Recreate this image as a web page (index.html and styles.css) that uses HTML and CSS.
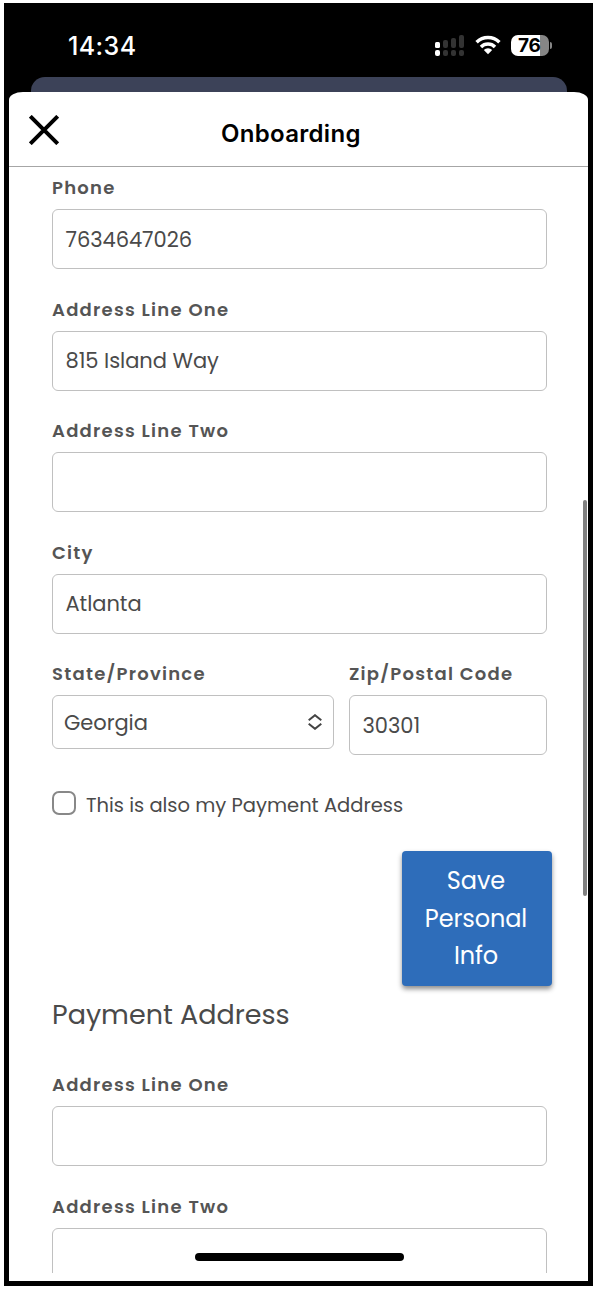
FILE: index.html
```html
<!DOCTYPE html>
<html lang="en">
<head>
<meta charset="utf-8">
<title>Onboarding</title>
<link rel="stylesheet" href="styles.css">
</head>
<body>
<div class="phone">
  <div class="status">
    <span class="time">14:34</span>
    <div class="indicators">
      <svg class="signal" width="30" height="22" viewBox="0 0 30 22">
        <g fill="#fff"><rect x="0" y="7" width="5" height="6" rx="1.5"/><rect x="0" y="15" width="5" height="6" rx="2"/></g>
        <g fill="#333"><rect x="8" y="5" width="5" height="8" rx="2"/><rect x="16" y="3" width="5" height="10" rx="2"/><rect x="24" y="0" width="5" height="13" rx="2"/><rect x="8" y="15" width="5" height="6" rx="2"/><rect x="16" y="15" width="5" height="6" rx="2"/><rect x="24" y="15" width="5" height="6" rx="2"/></g>
      </svg>
      <svg class="wifi" width="26" height="20" viewBox="0 0 26 20">
        <g fill="none" stroke="#fff" stroke-width="3.5"><path d="M1.6 7.2A16.3 16.3 0 0 1 24.4 7.2"/><path d="M6 11.9A10 10 0 0 1 20 11.9"/></g>
        <path d="M8.8 14.9a6 6 0 0 1 8.4 0L13 19.2z" fill="#fff"/>
      </svg>
      <div class="battery"><div class="cell">76</div><div class="tip"></div></div>
    </div>
  </div>
  <div class="back-card"></div>
  <main class="sheet">
    <header class="header">
      <svg class="close" width="30" height="30" viewBox="0 0 30 30"><path d="M1.3 1.3 28.7 28.7M28.7 1.3 1.3 28.7" stroke="#000" stroke-width="4"/></svg>
      <h1 class="title">Onboarding</h1>
    </header>
    <div class="content">
      <div class="field"><div class="label">Phone</div><div class="input">7634647026</div></div>
      <div class="field"><div class="label">Address Line One</div><div class="input">815 Island Way</div></div>
      <div class="field"><div class="label">Address Line Two</div><div class="input"></div></div>
      <div class="field"><div class="label">City</div><div class="input">Atlanta</div></div>
      <div class="row">
        <div class="field state">
          <div class="label">State/Province</div>
          <div class="select">Georgia
            <svg width="14" height="16" viewBox="0 0 14 16"><path d="M.7 6.2 7 1.2 13.3 6.2M.7 9.8 7 14.8 13.3 9.8" fill="none" stroke="#444" stroke-width="2"/></svg>
          </div>
        </div>
        <div class="field zip"><div class="label">Zip/Postal Code</div><div class="input">30301</div></div>
      </div>
      <div class="check"><span class="box"></span><span class="check-text">This is also my Payment Address</span></div>
      <div class="save"><span>Save</span><span>Personal</span><span>Info</span></div>
      <h2 class="section">Payment Address</h2>
      <div class="field"><div class="label">Address Line One</div><div class="input"></div></div>
      <div class="field"><div class="label">Address Line Two</div><div class="input"></div></div>
    </div>
    <div class="scrollbar"></div>
    <div class="home"></div>
  </main>
</div>
</body>
</html>
```
FILE: styles.css
```css
* { box-sizing: border-box; }
body { margin: 0; background: #fff; font-family: Poppins, Inter, sans-serif; color: #4a4a4a; }

.phone { margin: 3px 0 0 4px; width: 589px; height: 1283px; border: 5px solid #000; background: #000; display: flex; flex-direction: column; overflow: hidden; }

.status { height: 69px; display: flex; justify-content: space-between; padding: 0 36px 0 59px; flex: none; }
.time { font: 500 25px/30px Inter, sans-serif; letter-spacing: .4px; color: #fff; margin-top: 23px; }
.indicators { display: flex; height: 22px; margin-top: 27px; }
.signal { margin-right: 10px; }
.wifi { margin-right: 10px; }
.battery { display: flex; align-items: center; height: 21px; }
.cell { width: 38px; height: 21px; border-radius: 7px; background: linear-gradient(90deg, #fff 29px, #868686 29px); color: #000; font: 700 19px/21px Inter, sans-serif; letter-spacing: -.3px; padding-left: 7px; }
.tip { width: 2px; height: 7px; margin-left: 1px; border-radius: 0 2px 2px 0; background: #868686; }

.back-card { height: 15px; margin: 0 21px 0 22px; border-radius: 14px 14px 0 0; background: #3c4258; flex: none; }
.sheet { position: relative; flex: 1; background: #fff; border-radius: 14px 14px 0 0 / 8px 8px 0 0; min-height: 0; }
.header { height: 75px; border-bottom: 1px solid #a6a6a6; display: flex; padding: 23px 20px 0; }
.title { margin: 4px 0 0 162px; font: 600 24px/30px Inter, sans-serif; letter-spacing: .3px; color: #000; }

.content { height: 1106px; overflow: hidden; padding: 8px 41px 0 43px; }
.field { margin-bottom: 27.5px; }
.label { height: 34px; font-size: 18px; line-height: 26px; font-weight: 600; letter-spacing: 1.25px; color: #555; white-space: nowrap; }
.input, .select { border: 1px solid #c0c0c0; border-radius: 6px; height: 60px; display: flex; align-items: center; padding: 0 12.5px; font-size: 21px; letter-spacing: -.05px; }
.select { height: 54px; justify-content: space-between; padding: 0 11px; }
.row { display: flex; gap: 15px; }
.row .field { margin: 0; }
.state { width: 282px; }
.zip { width: 198px; }

.check { display: flex; align-items: center; gap: 10px; height: 28px; margin-top: 34px; font-size: 19.5px; }
.box { width: 24px; height: 24px; border: 2px solid #888; border-radius: 7px; }
.check-text { padding-top: 4px; }
.save { width: 150px; height: 135px; margin: 34px -5px 0 auto; border-radius: 4px; background: #2e6dba; color: #fff; box-shadow: 0 3px 5px rgba(0, 0, 0, .45); display: flex; flex-direction: column; align-items: center; padding: 11px 2px 0 0; font-size: 24px; line-height: 37.5px; letter-spacing: -.1px; }
.section { margin: 9px 0 37px; font-size: 27px; line-height: 40px; font-weight: 400; }

.scrollbar { position: absolute; right: 1px; top: 408px; width: 4px; height: 396px; border-radius: 2px; background: #808080; }
.home { position: absolute; left: 186px; bottom: 20px; width: 209px; height: 8px; border-radius: 4px; background: #000; }
```
